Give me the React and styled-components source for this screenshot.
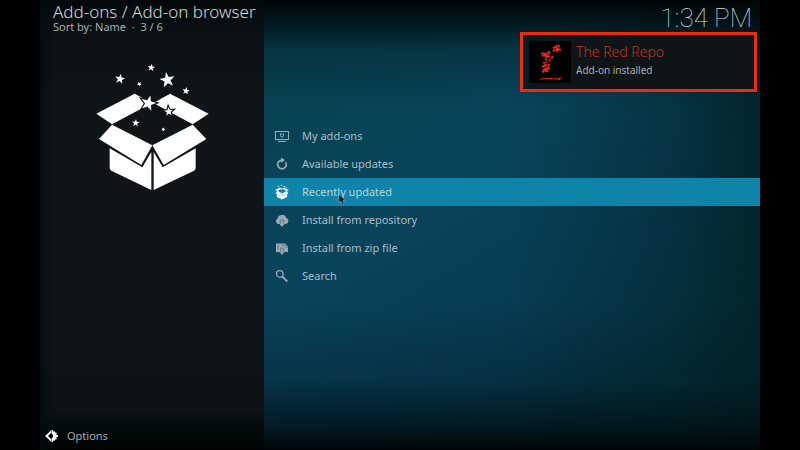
import React from "react";
import styled, { createGlobalStyle } from "styled-components";

const GlobalStyle = createGlobalStyle`
  * { box-sizing: border-box; }
  body {
    margin: 0;
    background: #000;
    color: #b9c3c6;
    font-family: "Noto Sans", "Open Sans", sans-serif;
    font-weight: 400;
  }
`;

const Screen = styled.div`
  min-height: 100vh;
  padding: 0 5%;
  display: grid;
  grid-template-columns: 224px 1fr;
`;

const Sidebar = styled.aside`
  display: flex;
  flex-direction: column;
  background:
    linear-gradient(90deg, rgba(2, 12, 14, 0.8), transparent 14px),
    linear-gradient(180deg, #02080a 0, #0b1114 36px, #0f1418 100px, #0f1418 350px, #0c1213 412px, #030a0c 426px, #010304 100%);
`;

const Heading = styled.header`
  padding: 2px 0 0 13px;
  white-space: nowrap;
`;

const Title = styled.h1`
  margin: 0;
  font-size: 17px;
  line-height: 20px;
  font-weight: 300;
  color: #d3d8d9;
`;

const Sort = styled.p`
  margin: 0;
  font-size: 11px;
  line-height: 10px;
  color: #a7aeb0;
  white-space: pre;
`;

const Artwork = styled.svg`
  width: 130px;
  height: 140px;
  margin: 23px 0 0 50px;
  fill: #fff;
`;

const OptionsButton = styled.button`
  display: flex;
  align-items: center;
  gap: 8px;
  margin-top: auto;
  height: 29px;
  padding: 0 3px;
  border: 0;
  background: none;
  color: #a4acae;
  font: inherit;
  font-size: 11px;
`;

const Main = styled.main`
  display: flex;
  flex-direction: column;
  background:
    linear-gradient(180deg, #010607 0, rgba(1, 9, 12, 0.75) 22px, rgba(2, 18, 24, 0.3) 50px, transparent 110px),
    linear-gradient(0deg, #010607 0, rgba(1, 12, 17, 0.7) 24px, rgba(2, 20, 30, 0.25) 70px, transparent 150px),
    linear-gradient(90deg, transparent 50%, rgba(2, 40, 46, 0.5) 82%, #03252b 100%),
    linear-gradient(150deg, #06424d 0%, #0a445c 38%, #073c54 62%, #043036 100%);
`;

const Clock = styled.time`
  height: 32px;
  padding: 4px 8px 0 0;
  text-align: right;
  font-family: Roboto, sans-serif;
  font-size: 26px;
  line-height: 29px;
  font-weight: 100;
  color: #d3dcde;
`;

const Toast = styled.section`
  align-self: flex-end;
  display: flex;
  align-items: center;
  gap: 5px;
  width: 237px;
  height: 60px;
  margin-right: 3px;
  padding: 0 6px;
  border: 3px solid #e92d12;
  background: linear-gradient(90deg, #04232c 0, #0a181b 8px, #0f1416 60px, #101416 100%);
`;

const ToastArt = styled.svg`
  width: 42px;
  height: 42px;
  background: #000;
`;

const ToastBody = styled.div`
  padding-bottom: 5px;
`;

const ToastTitle = styled.h2`
  margin: 0;
  font-size: 14px;
  line-height: 20px;
  font-weight: 300;
  color: #c03328;
`;

const ToastText = styled.p`
  margin: 0;
  font-size: 10px;
  line-height: 16px;
  color: #a8aeb0;
`;

const Menu = styled.nav`
  display: flex;
  flex-direction: column;
  margin-top: 30px;
`;

const MenuItem = styled.button`
  position: relative;
  display: flex;
  align-items: center;
  gap: 12px;
  height: 28px;
  padding: 0 10px;
  border: 0;
  background: ${(p) => (p.$selected ? "#0f84a8" : "transparent")};
  color: ${(p) => (p.$selected ? "#b3d5dd" : "#a8bec5")};
  font: inherit;
  font-size: 11px;
  text-align: left;
`;

const Label = styled.span`
  padding-bottom: 2px;
`;

const Icon = styled.svg`
  flex: none;
  width: 16px;
  height: 16px;
  color: ${(p) => (p.$bright ? "#f4fafb" : "#9baab1")};
`;

const Pointer = styled.svg`
  position: absolute;
  left: 74px;
  top: 15px;
  width: 8px;
  height: 12px;
`;

const starPoints = (cx, cy, r, turn = 0) =>
  Array.from({ length: 10 }, (_, i) => {
    const radius = i % 2 ? r * 0.4 : r;
    const a = ((i * 36 - 90 + turn) * Math.PI) / 180;
    return `${cx + radius * Math.cos(a)},${cy + radius * Math.sin(a)}`;
  }).join(" ");

const stars = [
  [184, 38, 12, 8], [90, 72, 16, 10], [148, 87, 8, 40], [232, 75, 24, -10],
  [288, 108, 12, 10], [175, 145, 24, 15], [236, 170, 14, -5], [137, 204, 12, 5], [220, 223, 7, 20],
];

const OpenBox = () => (
  <Artwork viewBox="0 0 390 420" aria-hidden="true">
    <path d="M19 176 134 116 186 144 66 208Z" />
    <path d="M356 176 240 116 190 144 308 208Z" />
    <path d="M66 209 187 271 154 330 27 252Z" />
    <path d="M308 209 187 271 221 330 349 252Z" />
    <path d="M59 280 157 337 184 291V405L64 347Q59 344 59 338Z" />
    <path d="M317 280 218 337 191 291V405L312 347Q317 344 317 338Z" />
    {stars.map(([x, y, r, t], i) => (
      <polygon key={i} points={starPoints(x, y, r, t)} stroke="#0f1418" strokeWidth={i === 5 || i === 6 ? 7 : 0} paintOrder="stroke" />
    ))}
  </Artwork>
);

const glyphs = {
  addons: (
    <g fill="none" stroke="currentColor">
      <rect x="1.500" y="3.500" width="13" height="8" />
      <path d="M4 13.500h8M6.500 5.500v2a1.500 1.500 0 0 0 3 0v-2M8 5.500v1.500" />
    </g>
  ),
  updates: (
    <g>
      <path d="M11.600 6.200A4.300 4.300 0 1 1 7.500 4.200" fill="none" stroke="currentColor" strokeWidth="1.700" />
      <path d="M7 1.500 11 4 7 7Z" fill="currentColor" />
    </g>
  ),
  recent: (
    <g fill="currentColor" stroke="currentColor" strokeWidth=".3">
      <path d="M1.500 6 6 3.800 7.500 4.600 3.300 7ZM14.500 6 10 3.800 8.500 4.600 12.700 7ZM3.300 7.100 8 9.500 6.700 12 1.800 9.400ZM12.700 7.100 8 9.500 9.300 12 14.200 9.400ZM3 10.500 6.900 12.500 8 10.500V15.200L3 13ZM13 10.500 9.100 12.500 8 10.500V15.200L13 13Z" />
      <path d="M4 2.200h.8V3H4ZM7.300.9h.7v.7h-.7ZM9.900 2h1v1h-1ZM7.400 4.400h1v1h-1ZM12 3.200h.6v.6H12Z" />
    </g>
  ),
  repository: (
    <g fill="currentColor">
      <path d="M4.200 12A3 3 0 0 1 3.500 6.500 4.500 4.500 0 0 1 12.200 6 3.100 3.100 0 0 1 12 12H10.500L8 15 5.500 12Z" />
      <path d="M6.300 12V8h3.400v4" fill="none" stroke="#496777" strokeWidth=".7" />
    </g>
  ),
  zip: (
    <g fill="currentColor">
      <path d="M2 3.500h9l3 3V12h-3.500L8 15 5.500 12H2Z" />
      <path d="M4 5v5M7 5h3M11 4v3h3M5.500 12h1V8h3v4h1" fill="none" stroke="#496777" strokeWidth=".7" />
    </g>
  ),
  search: (
    <g fill="none" stroke="currentColor" strokeWidth="1.300">
      <circle cx="5.800" cy="6" r="3.300" />
      <path d="m8.300 8.500 5 5" strokeWidth="1.800" />
    </g>
  ),
};

const items = [
  ["addons", "My add-ons"],
  ["updates", "Available updates"],
  ["recent", "Recently updated"],
  ["repository", "Install from repository"],
  ["zip", "Install from zip file"],
  ["search", "Search"],
];

const RepoLogo = () => (
  <ToastArt viewBox="0 0 42 42" aria-hidden="true">
    <g fill="none" stroke="#f32b18" strokeWidth="1.800">
      <path d="m12 13 3-1 2 1 3-2 2 1M13 15l4-1 1 2 3-1M15 12l2 5M20 11l-1 5" strokeDasharray="3 .6" />
      <path d="m24 7 3-1 1-2M24 10l4-2 4 1M27 5l1 6M30 4l-1 7" strokeDasharray="2.500 .7" />
      <path d="m16 19 3-1M20 20l3-3M14 22l4-1M23 15l1 2" strokeDasharray="2 1" />
      <path d="m13 26 3-2 4 1M14 29l5-2 2 1M16 24l1 7M20 23l-2 8M13 31l4-1" strokeDasharray="2.500 .6" />
      <path d="M11 38 19 37.500 29 38 32 37" strokeWidth="1.200" strokeDasharray="4 .5" />
      <path d="m29 38 2 1" strokeWidth="1" />
    </g>
  </ToastArt>
);

export default function App() {
  return (
    <>
      <GlobalStyle />
      <Screen>
        <Sidebar>
          <Heading>
            <Title>Add-ons / Add-on browser</Title>
            <Sort>{"Sort by: Name  ·  3 / 6"}</Sort>
          </Heading>
          <OpenBox />
          <OptionsButton type="button">
            <Icon $bright viewBox="0 0 16 16" aria-hidden="true">
              <path d="M8 2.500 2 8l6 5.500V11L5 8l3-3Z" fill="currentColor" />
              <path d="M8.500 2h1.500v1.500l1.500-.5.500 1.500h1.500V7H15v2h-1.500v2.500H12l-.5 1.500-1.500-.5V14H8.500v-3.500a2.800 2.800 0 0 0 0-5Z" fill="currentColor" />
            </Icon>
            Options
          </OptionsButton>
        </Sidebar>
        <Main>
          <Clock>1:34 PM</Clock>
          <Toast role="status">
            <RepoLogo />
            <ToastBody>
              <ToastTitle>The Red Repo</ToastTitle>
              <ToastText>Add-on installed</ToastText>
            </ToastBody>
          </Toast>
          <Menu aria-label="Add-on browser">
            {items.map(([id, label]) => (
              <MenuItem key={id} type="button" $selected={id === "recent"}>
                <Icon viewBox="0 0 16 16" $bright={id === "recent"} aria-hidden="true">{glyphs[id]}</Icon>
                <Label>{label}</Label>
                {id === "recent" && (
                  <Pointer viewBox="0 0 8 12" aria-hidden="true">
                    <path d="M1 1v8.500l2-1.500 1.200 3 1.600-.7L4.600 7.500H7Z" fill="#080c10" stroke="#9fb5bd" strokeWidth=".5" />
                  </Pointer>
                )}
              </MenuItem>
            ))}
          </Menu>
        </Main>
      </Screen>
    </>
  );
}
